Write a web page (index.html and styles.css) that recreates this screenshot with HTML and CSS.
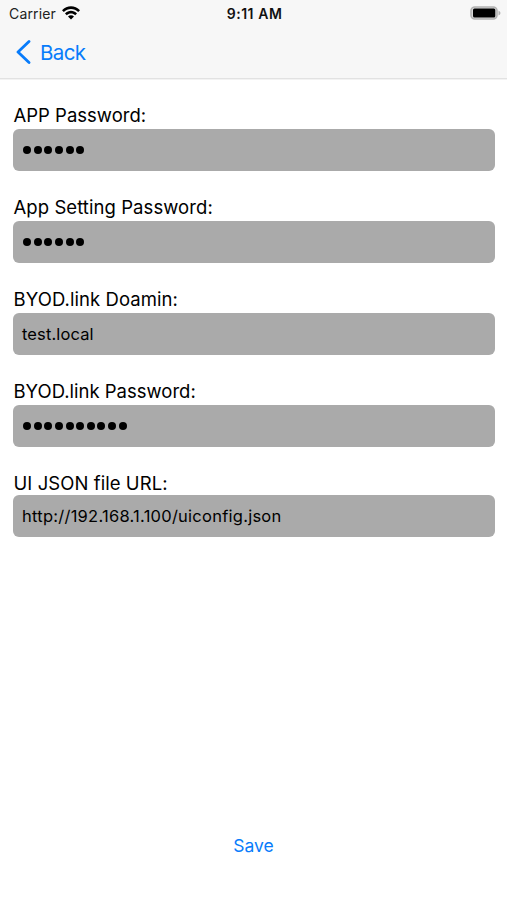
FILE: index.html
```html
<!DOCTYPE html>
<html lang="en">
<head>
<meta charset="utf-8">
<title>Settings</title>
<link rel="stylesheet" href="styles.css">
</head>
<body>
<div class="screen">
  <header class="header">
    <div class="status">
      <div class="carrier"><span class="carrier-name">Carrier</span>
        <svg class="wifi" width="18" height="14" viewBox="0 0 18 14"><path d="M0 4.3C5-1.1 13-1.1 18 4.3L16.2 6.1C12.2 1.9 5.8 1.9 1.8 6.1ZM3 7.4C6.4 3.9 11.6 3.9 15 7.4L13.2 9.2C10.8 6.8 7.2 6.8 4.8 9.2ZM6 10.4C7.7 8.8 10.3 8.8 12 10.4L9 13.5Z"/></svg>
      </div>
      <span class="time">9:11 AM</span>
      <svg class="battery" width="31" height="14" viewBox="0 0 31 14"><rect x="1" y="1" width="26" height="12" rx="3.8" fill="#d8d8d8" stroke="#b2b2b2" stroke-width="1.6"/><rect x="3" y="2.6" width="22.3" height="8.8" rx="1.5"/><path d="M28.5 4.5Q30.5 5.5 30.5 7T28.5 9.5Z" fill="#b2b2b2"/></svg>
    </div>
    <a class="back">
      <svg width="15" height="24" viewBox="0 0 15 24"><path d="M13 1.5L2 12l11 10.5" fill="none" stroke="#087cfb" stroke-width="2.8" stroke-linecap="round" stroke-linejoin="round"/></svg>
      <span class="back-text">Back</span>
    </a>
  </header>
  <main class="form">
    <div class="group"><div class="label">APP Password:</div><div class="field dots"><i></i><i></i><i></i><i></i><i></i><i></i></div></div>
    <div class="group"><div class="label wide">App Setting Password:</div><div class="field dots"><i></i><i></i><i></i><i></i><i></i><i></i></div></div>
    <div class="group"><div class="label wide">BYOD.link Doamin:</div><div class="field"><span class="domain">test.local</span></div></div>
    <div class="group"><div class="label">BYOD.link Password:</div><div class="field dots"><i></i><i></i><i></i><i></i><i></i><i></i><i></i><i></i><i></i><i></i></div></div>
    <div class="group last"><div class="label wide">UI JSON file URL:</div><div class="field"><span class="url">http://192.168.1.100/uiconfig.json</span></div></div>
  </main>
  <footer class="footer"><span class="save">Save</span></footer>
</div>
</body>
</html>
```
FILE: styles.css
```css
* { box-sizing: border-box; }
body { margin: 0; background: #fff; color: #000; font-family: Inter, "Liberation Sans", sans-serif; }
.screen { height: 900px; display: flex; flex-direction: column; }
.header { height: 80px; background: linear-gradient(#f7f7f7 78px, #e2e2e2 78px, #e2e2e2 79px, #f3f3f3 79px); }
.status { height: 26px; padding: 0 6px 0 9px; display: grid; grid-template-columns: 1fr auto 1fr; align-items: center; font-size: 13.5px; }
.carrier { display: flex; align-items: center; gap: 6px; color: #222; }
.carrier-name { font-size: 14px; letter-spacing: .15px; }
.wifi { display: block; fill: #000; }
.time { font-size: 14px; font-weight: 600; letter-spacing: .55px; padding-top: 1px; margin-right: 1px; color: #111; }
.battery { justify-self: end; }
.back { display: flex; align-items: center; height: 52px; padding-left: 16px; gap: 9px; color: #087cfb; font-size: 20.5px; }
.back-text { letter-spacing: -.6px; }
.form { padding: 22px 12px 0 13px; }
.group { height: 92px; }
.label { height: 27px; line-height: 26px; font-size: 18.5px; white-space: nowrap; padding-left: .5px; }
.wide { letter-spacing: .07px; }
.field { height: 42px; background: #aaa; border-radius: 6px; padding-left: 9px; display: flex; align-items: center; font-size: 16.5px; white-space: nowrap; }
.domain { letter-spacing: .12px; }
.url { letter-spacing: .25px; }
.dots { gap: 2.65px; padding-left: 10px; }
.dots i { width: 8px; height: 8px; border-radius: 50%; background: #000; }
.last .label { height: 25px; }
.footer { margin-top: auto; height: 69px; text-align: center; color: #087cfb; font-size: 17.5px; line-height: 29px; }
```
